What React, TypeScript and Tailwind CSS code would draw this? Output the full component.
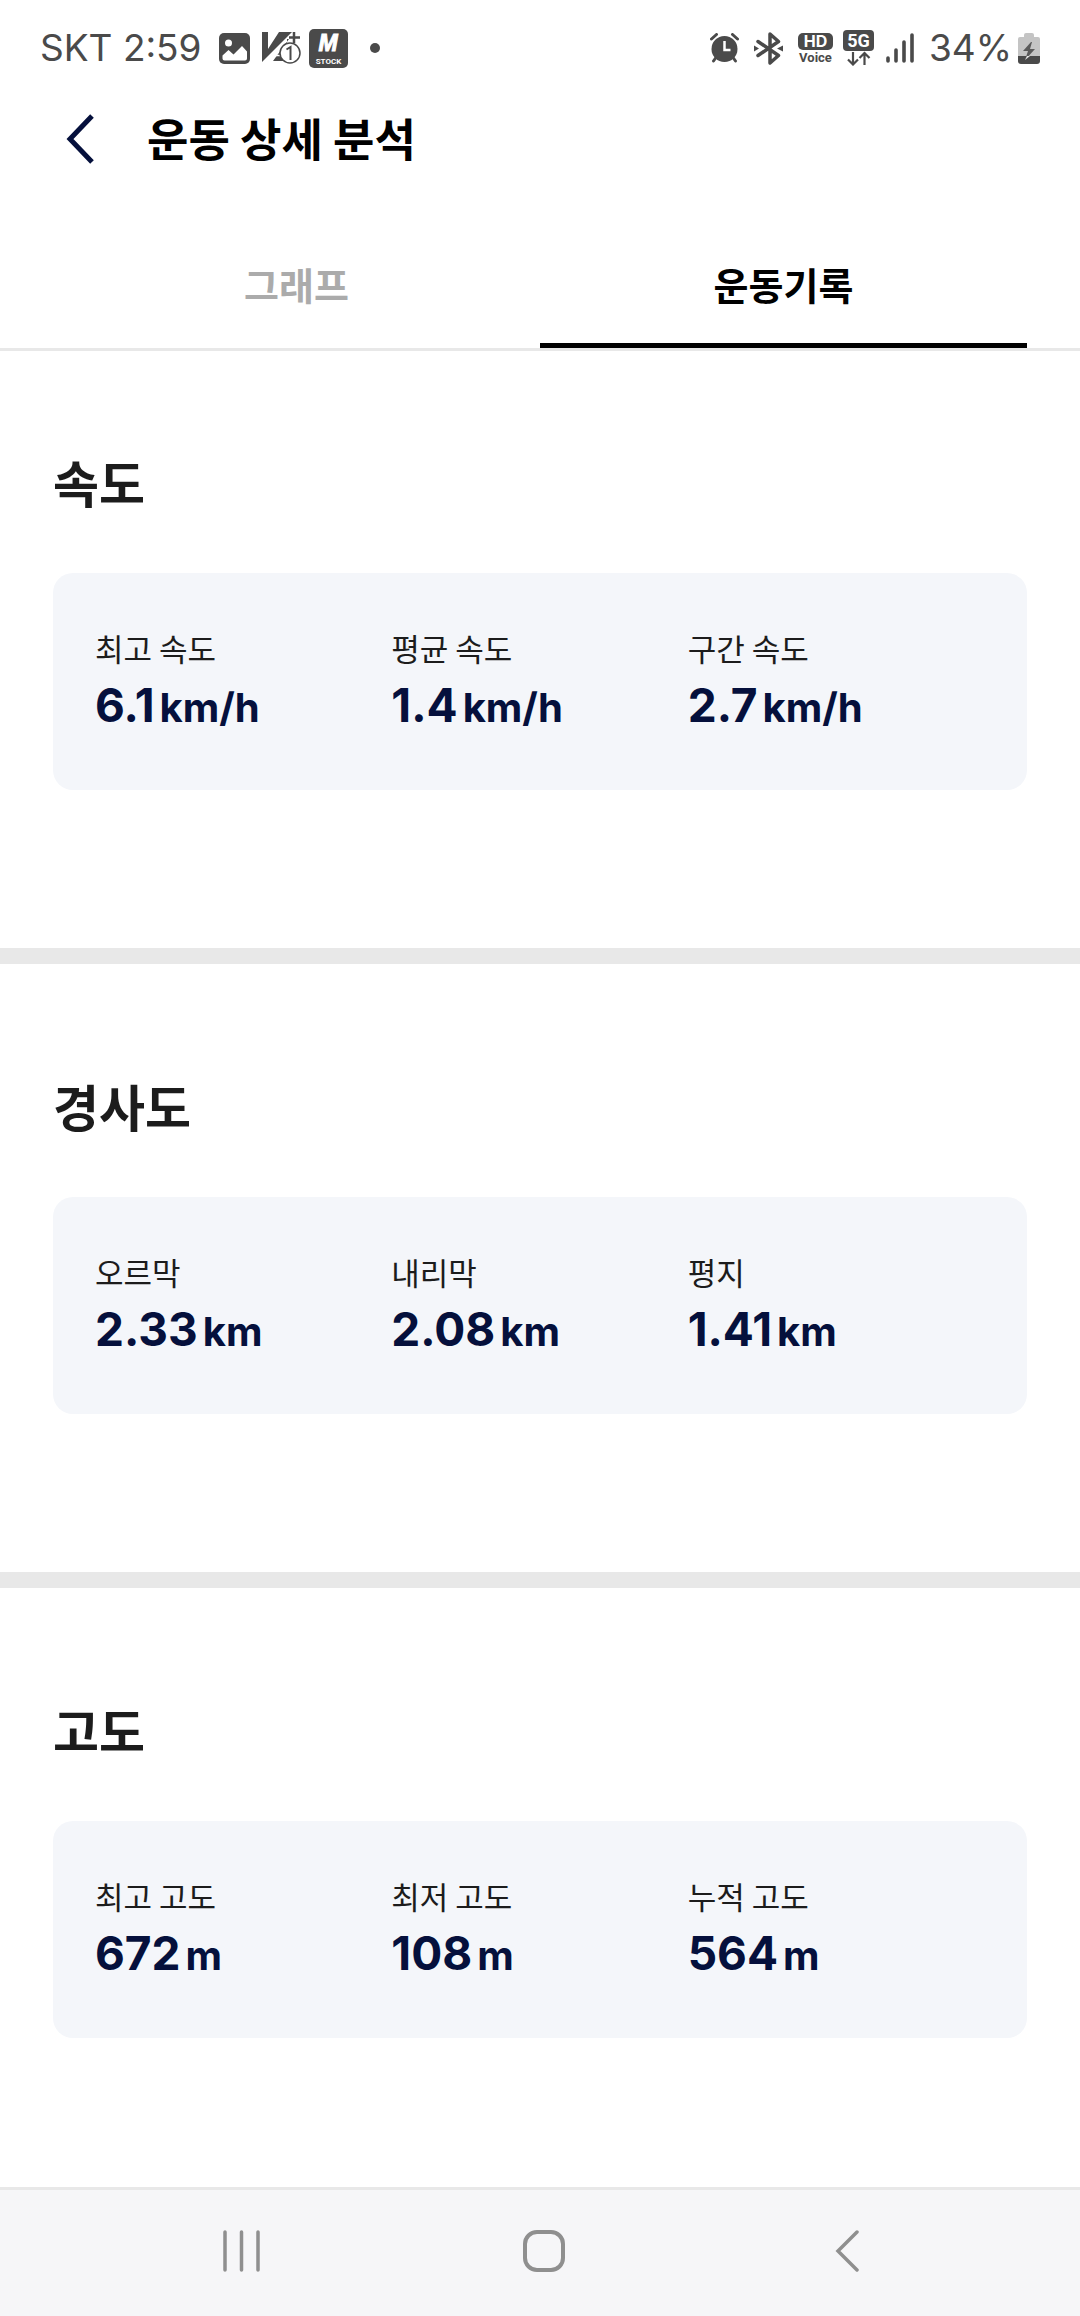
import React, { useState } from "react";

interface Stat {
  label: string;
  value: string;
  unit: string;
}

interface StatGroup {
  title: string;
  stats: Stat[];
}

const TABS = ["그래프", "운동기록"];

const GROUPS: StatGroup[] = [
  {
    title: "속도",
    stats: [
      { label: "최고 속도", value: "6.1", unit: "km/h" },
      { label: "평균 속도", value: "1.4", unit: "km/h" },
      { label: "구간 속도", value: "2.7", unit: "km/h" },
    ],
  },
  {
    title: "경사도",
    stats: [
      { label: "오르막", value: "2.33", unit: "km" },
      { label: "내리막", value: "2.08", unit: "km" },
      { label: "평지", value: "1.41", unit: "km" },
    ],
  },
  {
    title: "고도",
    stats: [
      { label: "최고 고도", value: "672", unit: "m" },
      { label: "최저 고도", value: "108", unit: "m" },
      { label: "누적 고도", value: "564", unit: "m" },
    ],
  },
];

const PictureIcon = () => (
  <svg width="31" height="31" viewBox="0 0 31 31">
    <rect width="31" height="31" rx="5" fill="#4a4a4a" />
    <circle cx="9.500" cy="10" r="3.500" fill="#fff" />
    <path d="M3.500 22.500l6-5.500 5 4.500 8.500-8.500 5 5.500v7q0 2-2 2H5.500q-2 0-2-2z" fill="#fff" />
  </svg>
);

const VaccineIcon = () => (
  <svg width="39" height="34" viewBox="0 0 39 34">
    <path d="M0 1h6v17L17 1h13L0 31z" fill="#4a4a4a" />
    <path d="M27 8L11 30h14V8z" fill="#4a4a4a" />
    <path d="M14 20h6M13 24.500h6" stroke="#fff" strokeWidth="1.500" />
    <path d="M32 1v11M27 6.500h11" stroke="#4a4a4a" strokeWidth="2.500" />
    <circle cx="28" cy="22" r="10" fill="#fff" stroke="#4a4a4a" strokeWidth="1.500" />
    <path d="M24.500 18.500l4-2.500v13" fill="none" stroke="#4a4a4a" strokeWidth="2" />
  </svg>
);

const StockIcon = () => (
  <svg width="39" height="39" viewBox="0 0 39 39">
    <rect width="39" height="39" rx="5" fill="#4a4a4a" />
    <text x="19" y="22" textAnchor="middle" fontFamily="'Liberation Sans', sans-serif" fontSize="23" fontWeight="700" fontStyle="italic" fill="#fff" stroke="#fff">M</text>
    <text x="19.500" y="35" textAnchor="middle" fontFamily="Roboto, sans-serif" fontSize="8" fontWeight="700" fill="#fff">STOCK</text>
  </svg>
);

const AlarmIcon = () => (
  <svg width="29" height="30" viewBox="0 0 29 30">
    <g fill="none" stroke="#4a4a4a" strokeWidth="3" strokeLinecap="round">
      <path d="M1.500 6l5-4.500M27.500 6l-5-4.500M6 24.500l-2.500 3.500M23 24.500l2.500 3.500" />
    </g>
    <circle cx="14.500" cy="16" r="13" fill="#4a4a4a" />
    <path d="M14.500 8v9h6" fill="none" stroke="#fff" strokeWidth="2.500" />
  </svg>
);

const BluetoothIcon = () => (
  <svg width="29" height="33" viewBox="0 0 29 33">
    <path d="M4 9.500l20.500 14-8.500 7.500V2l8.500 7.500L4 23.500" fill="none" stroke="#4a4a4a" strokeWidth="3.500" strokeLinejoin="round" strokeLinecap="round" />
    <path d="M0 13.500l5 3-5 3zM29 13.500l-6 3 6 3z" fill="#4a4a4a" />
  </svg>
);

const HdVoiceIcon = () => (
  <svg width="35" height="32" viewBox="0 0 35 32">
    <rect y="1" width="35" height="17" rx="5" fill="#4a4a4a" />
    <text x="17.500" y="15" textAnchor="middle" fontFamily="Inter, sans-serif" fontSize="16" fontWeight="700" fill="#fff">HD</text>
    <text x="17.500" y="30" textAnchor="middle" fontFamily="Roboto, sans-serif" fontSize="13" fontWeight="700" fill="#4a4a4a">Voice</text>
  </svg>
);

const FiveGIcon = () => (
  <svg width="31" height="36" viewBox="0 0 31 36">
    <rect width="31" height="21" rx="4" fill="#4a4a4a" />
    <text x="15.500" y="17" textAnchor="middle" fontFamily="Roboto, sans-serif" fontSize="18" fontWeight="700" fill="#fff">5G</text>
    <path d="M10 22v12M5 29.500l5 5 5-5M21.500 35V23M16.500 28l5-5 5 5" fill="none" stroke="#4a4a4a" strokeWidth="2.200" />
  </svg>
);

const SignalIcon = () => (
  <svg width="28" height="30" viewBox="0 0 28 30">
    <path d="M2 25v3M10 17v11M18 9v19M26 2v26" stroke="#4a4a4a" strokeWidth="3.600" strokeLinecap="round" />
  </svg>
);

const BatteryIcon = () => (
  <svg width="22" height="31" viewBox="0 0 22 31">
    <path d="M6 4V2q0-2 2-2h6q2 0 2 2v2h4q2 0 2 2v18H0V6q0-2 2-2z" fill="#c4c4c4" />
    <path d="M0 23h22v5q0 3-3 3H3q-3 0-3-3z" fill="#4a4a4a" />
    <path d="M13 9L5 18h5l-3 9 10-11h-5l2-7z" fill="#5a5a5a" />
    <path d="M9 23h3l-5 4z" fill="#e5e5e5" />
  </svg>
);

function StatusBar() {
  return (
    <div className="flex h-24 items-center justify-between px-10 font-['Inter',sans-serif] text-[37px] leading-[48px] text-[#4a4a4a]">
      <div className="flex items-center">
        <span className="mr-[17px]">SKT 2:59</span>
        <span className="mr-3"><PictureIcon /></span>
        <span className="mr-2"><VaccineIcon /></span>
        <StockIcon />
        <span className="ml-[22px] size-[10px] rounded-full bg-[#4a4a4a]" />
      </div>
      <div className="flex items-center">
        <span className="mr-[15px]"><AlarmIcon /></span>
        <span className="mr-[15px]"><BluetoothIcon /></span>
        <span className="mr-[10px]"><HdVoiceIcon /></span>
        <span className="mr-3"><FiveGIcon /></span>
        <span className="mr-[15px]"><SignalIcon /></span>
        <span className="mr-[6px]">34%</span>
        <BatteryIcon />
      </div>
    </div>
  );
}

function StatCard({ stats }: { stats: Stat[] }) {
  return (
    <dl className="grid grid-cols-3 rounded-[20px] bg-[#f4f6fa] pt-[53px] pr-[43px] pb-[52px] pl-[42px]">
      {stats.map((stat) => (
        <div key={stat.label}>
          <dt className="text-[31px] leading-[44px] text-[#1c1c1c]">{stat.label}</dt>
          <dd className="mt-[5px] flex items-baseline gap-[5px] font-['Inter',sans-serif] font-bold leading-[60px] text-[#05103c]">
            <span className="text-[46px]">{stat.value}</span>
            <span className="text-[40px]">{stat.unit}</span>
          </dd>
        </div>
      ))}
    </dl>
  );
}

export default function App() {
  const [activeTab, setActiveTab] = useState("운동기록");

  return (
    <div className="flex min-h-screen flex-col bg-white font-['Noto_Sans_CJK_KR',sans-serif]">
      <StatusBar />

      {/* Header */}
      <header className="flex h-[86px] items-center pl-[66px]">
        <button type="button" aria-label="뒤로">
          <svg width="28" height="50" viewBox="0 0 28 50">
            <path d="M26 2L4 25l22 23" fill="none" stroke="#05103c" strokeWidth="5" />
          </svg>
        </button>
        <h1 className="ml-[53px] pb-[3px] text-[45px] font-bold leading-[60px] text-black">운동 상세 분석</h1>
      </header>

      {/* Tabs */}
      <div role="tablist" className="mt-[47px] flex border-b-3 border-[#e8e8e8] px-[53px]">
        {TABS.map((tab) => (
          <button
            key={tab}
            type="button"
            role="tab"
            aria-selected={activeTab === tab}
            onClick={() => setActiveTab(tab)}
            className={`h-[119px] flex-1 border-b-5 pb-1 text-[38px] font-bold leading-[56px] ${
              activeTab === tab ? "border-black text-black" : "border-transparent text-[#ababab]"
            }`}
          >
            {tab}
          </button>
        ))}
      </div>

      {/* Records */}
      <main className="flex-1 divide-y-16 divide-[#e8e8e8]">
        {GROUPS.map((group) => (
          <section key={group.title} className="px-[53px] pt-[104px] pb-[158px] first:pt-[93px] last:pb-[149px]">
            <h2 className="mb-[55px] text-[50px] font-bold leading-[74px] text-[#1c1c1c]">{group.title}</h2>
            <StatCard stats={group.stats} />
          </section>
        ))}
      </main>

      {/* System navigation */}
      <nav className="grid h-[129px] grid-cols-3 border-t-3 border-[#e8e8e8] bg-[#f6f6f8] pr-[82px] pb-1 pl-[91px]">
        <button type="button" aria-label="최근 앱" className="flex items-center justify-center">
          <svg width="38" height="42" viewBox="0 0 38 42">
            <path d="M2 2v38M18.500 2v38M35 2v38" stroke="#8f8f8f" strokeWidth="3.500" strokeLinecap="round" />
          </svg>
        </button>
        <button type="button" aria-label="홈" className="flex items-center justify-center">
          <svg width="42" height="42" viewBox="0 0 42 42">
            <rect x="2" y="2" width="38" height="38" rx="12" fill="none" stroke="#8f8f8f" strokeWidth="4" />
          </svg>
        </button>
        <button type="button" aria-label="이전" className="flex items-center justify-center">
          <svg width="24" height="42" viewBox="0 0 24 42">
            <path d="M22 2L3 21l19 19" fill="none" stroke="#8f8f8f" strokeWidth="3.500" strokeLinecap="round" />
          </svg>
        </button>
      </nav>
    </div>
  );
}
